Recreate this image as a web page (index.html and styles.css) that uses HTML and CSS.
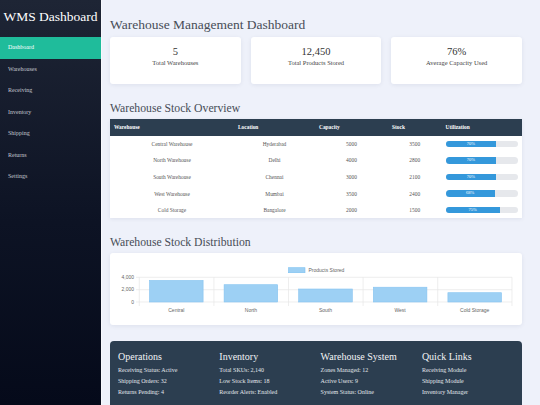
FILE: index.html
```html
<!DOCTYPE html>
<html>
<head>
<meta charset="utf-8">
<title>WMS Dashboard</title>
<link rel="stylesheet" href="styles.css">
</head>
<body>
<aside class="sidebar">
  <div class="brand">WMS Dashboard</div>
  <nav class="nav">
    <a class="nav-item active">Dashboard</a>
    <a class="nav-item">Warehouses</a>
    <a class="nav-item">Receiving</a>
    <a class="nav-item">Inventory</a>
    <a class="nav-item">Shipping</a>
    <a class="nav-item">Returns</a>
    <a class="nav-item">Settings</a>
  </nav>
</aside>
<main class="main">
  <h1 class="page-title">Warehouse Management Dashboard</h1>
  <div class="stats">
    <div class="stat-card"><div class="stat-num">5</div><div class="stat-label">Total Warehouses</div></div>
    <div class="stat-card"><div class="stat-num">12,450</div><div class="stat-label">Total Products Stored</div></div>
    <div class="stat-card"><div class="stat-num">76%</div><div class="stat-label">Average Capacity Used</div></div>
  </div>

  <h2 class="section-title">Warehouse Stock Overview</h2>
  <table class="stock-table">
    <colgroup>
      <col class="c1"><col class="c2"><col class="c3"><col class="c4"><col class="c5">
    </colgroup>
    <thead>
      <tr><th>Warehouse</th><th>Location</th><th>Capacity</th><th>Stock</th><th>Utilization</th></tr>
    </thead>
    <tbody>
      <tr><td>Central Warehouse</td><td>Hyderabad</td><td>5000</td><td>3500</td><td><div class="bar"><div class="bar-fill" style="width:70%">70%</div></div></td></tr>
      <tr><td>North Warehouse</td><td>Delhi</td><td>4000</td><td>2800</td><td><div class="bar"><div class="bar-fill" style="width:70%">70%</div></div></td></tr>
      <tr><td>South Warehouse</td><td>Chennai</td><td>3000</td><td>2100</td><td><div class="bar"><div class="bar-fill" style="width:70%">70%</div></div></td></tr>
      <tr><td>West Warehouse</td><td>Mumbai</td><td>3500</td><td>2400</td><td><div class="bar"><div class="bar-fill" style="width:68%">68%</div></div></td></tr>
      <tr><td>Cold Storage</td><td>Bangalore</td><td>2000</td><td>1500</td><td><div class="bar"><div class="bar-fill" style="width:75%">75%</div></div></td></tr>
    </tbody>
  </table>

  <h2 class="section-title dist-title">Warehouse Stock Distribution</h2>
  <div class="chart-card">
    <svg class="chart" width="412" height="72" viewBox="0 0 412 72">
      <rect x="178.5" y="14.7" width="16.5" height="5" fill="#9dd0f4" stroke="#7cc0f0" stroke-width="0.6"/>
      <text x="198.5" y="19.1" class="lg">Products Stored</text>
      <g stroke="#e6e6e6" stroke-width="0.7">
        <line x1="26" y1="24.3" x2="402" y2="24.3"/>
        <line x1="26" y1="36.7" x2="402" y2="36.7"/>
        <line x1="26" y1="49" x2="402" y2="49"/>
        <line x1="29.3" y1="24.3" x2="29.3" y2="53"/>
        <line x1="103.9" y1="24.3" x2="103.9" y2="53"/>
        <line x1="178.5" y1="24.3" x2="178.5" y2="53"/>
        <line x1="253.1" y1="24.3" x2="253.1" y2="53"/>
        <line x1="327.7" y1="24.3" x2="327.7" y2="53"/>
        <line x1="402" y1="24.3" x2="402" y2="53"/>
      </g>
      <text x="24" y="26" class="yl">4,000</text>
      <text x="24" y="38.4" class="yl">2,000</text>
      <text x="24" y="50.7" class="yl">0</text>
      <g fill="#9dd0f4" stroke="#86c4f1" stroke-width="0.6">
        <rect x="39.5" y="27.4" width="53.6" height="21.6"/>
        <rect x="114.1" y="31.7" width="53.6" height="17.3"/>
        <rect x="188.7" y="36" width="53.6" height="13"/>
        <rect x="263.3" y="34.2" width="53.6" height="14.8"/>
        <rect x="337.9" y="39.7" width="53.6" height="9.3"/>
      </g>
      <text x="66.3" y="58.8" class="xl">Central</text>
      <text x="140.9" y="58.8" class="xl">North</text>
      <text x="215.5" y="58.8" class="xl">South</text>
      <text x="290.1" y="58.8" class="xl">West</text>
      <text x="364.7" y="58.8" class="xl">Cold Storage</text>
    </svg>
  </div>

  <footer class="footer">
    <div class="f-col">
      <h3 class="f-head">Operations</h3>
      <p class="f-line">Receiving Status: Active</p>
      <p class="f-line">Shipping Orders: 32</p>
      <p class="f-line">Returns Pending: 4</p>
    </div>
    <div class="f-col">
      <h3 class="f-head">Inventory</h3>
      <p class="f-line">Total SKUs: 2,140</p>
      <p class="f-line">Low Stock Items: 18</p>
      <p class="f-line">Reorder Alerts: Enabled</p>
    </div>
    <div class="f-col">
      <h3 class="f-head">Warehouse System</h3>
      <p class="f-line">Zones Managed: 12</p>
      <p class="f-line">Active Users: 9</p>
      <p class="f-line">System Status: Online</p>
    </div>
    <div class="f-col">
      <h3 class="f-head">Quick Links</h3>
      <p class="f-line">Receiving Module</p>
      <p class="f-line">Shipping Module</p>
      <p class="f-line">Inventory Manager</p>
    </div>
  </footer>
</main>
</body>
</html>
```
FILE: styles.css
```css
html, body {
  margin: 0;
  padding: 0;
  height: 100%;
  overflow: hidden;
}
body {
  display: flex;
  font-family: "Liberation Serif", "Times New Roman", serif;
  background: #eef1fa;
}
.sidebar {
  width: 101px;
  flex: 0 0 101px;
  height: 100vh;
  background: linear-gradient(180deg, #1e2535 0%, #0d1324 55%, #050a1a 100%);
  border-right: 1px solid #f7f8fc;
}
.brand {
  color: #ffffff;
  font-size: 13.5px;
  line-height: 16px;
  padding-top: 9px;
  height: 28.3px;
  text-align: center;
  white-space: nowrap;
}
.nav {
  display: flex;
  flex-direction: column;
}
.nav-item {
  display: block;
  height: 21.5px;
  line-height: 21.5px;
  padding-left: 8px;
  font-size: 6px;
  color: #c3c7cf;
}
.nav-item.active {
  background: #1fbc9b;
  color: #ffffff;
}
.main {
  flex: 1;
  padding: 17px 18px 0 8px;
  min-width: 0;
}
.page-title {
  margin: 0;
  font-size: 13.5px;
  line-height: 16px;
  font-weight: normal;
  color: #474d57;
}
.stats {
  margin-top: 4px;
  display: grid;
  grid-template-columns: repeat(3, 1fr);
  column-gap: 10px;
}
.stat-card {
  background: #ffffff;
  height: 46.5px;
  box-sizing: border-box;
  padding-top: 9px;
  border-radius: 3px;
  box-shadow: 0 1px 4px rgba(30, 40, 80, 0.08);
  text-align: center;
}
.stat-num {
  font-size: 10.5px;
  line-height: 12px;
  color: #333333;
}
.stat-label {
  font-size: 6.5px;
  line-height: 8px;
  margin-top: 1px;
  color: #444444;
}
.section-title {
  margin: 18px 0 0;
  font-size: 11.7px;
  line-height: 14px;
  font-weight: normal;
  color: #474d57;
}
.stock-table {
  margin-top: 3px;
  width: 412px;
  table-layout: fixed;
  border-collapse: collapse;
  background: #ffffff;
  box-shadow: 0 1px 4px rgba(30, 40, 80, 0.08);
  font-size: 5.4px;
}
.c1 { width: 124px; }
.c2 { width: 81px; }
.c3 { width: 73px; }
.c4 { width: 53.5px; }
.c5 { width: 80.5px; }
.stock-table th {
  background: #2c3e50;
  color: #ffffff;
  font-weight: bold;
  text-align: left;
  height: 17px;
  padding: 0 4px;
}
.stock-table td {
  height: 16.6px;
  padding: 0 4px;
  text-align: center;
  color: #555555;
}
.bar {
  height: 6.5px;
  background: #e6e8ec;
  border-radius: 3.5px;
  overflow: hidden;
}
.bar-fill {
  height: 100%;
  background: #3498db;
  color: #ffffff;
  font-size: 4.5px;
  line-height: 6.5px;
  text-align: center;
}
.dist-title {
  margin-top: 17.5px;
}
.chart-card {
  margin-top: 3.5px;
  background: #ffffff;
  height: 71.7px;
  border-radius: 3px;
  box-shadow: 0 1px 4px rgba(30, 40, 80, 0.08);
}
.chart {
  display: block;
  font-family: "Liberation Sans", Arial, sans-serif;
}
.chart .lg {
  font-size: 5px;
  fill: #666666;
}
.chart .yl {
  font-size: 5px;
  fill: #666666;
  text-anchor: end;
}
.chart .xl {
  font-size: 5px;
  fill: #666666;
  text-anchor: middle;
}
.footer {
  margin-top: 16px;
  background: #2c3e50;
  border-radius: 4px 4px 0 0;
  padding: 10px 0 20px 8px;
  display: grid;
  grid-template-columns: repeat(4, 101.3px);
}
.f-head {
  margin: 0;
  font-size: 10px;
  line-height: 12px;
  font-weight: normal;
  color: #f2f4f6;
}
.f-line {
  margin: 0;
  font-size: 6px;
  line-height: 10.7px;
  color: #e3e7ec;
}
.f-head + .f-line {
  margin-top: 2px;
}
```
